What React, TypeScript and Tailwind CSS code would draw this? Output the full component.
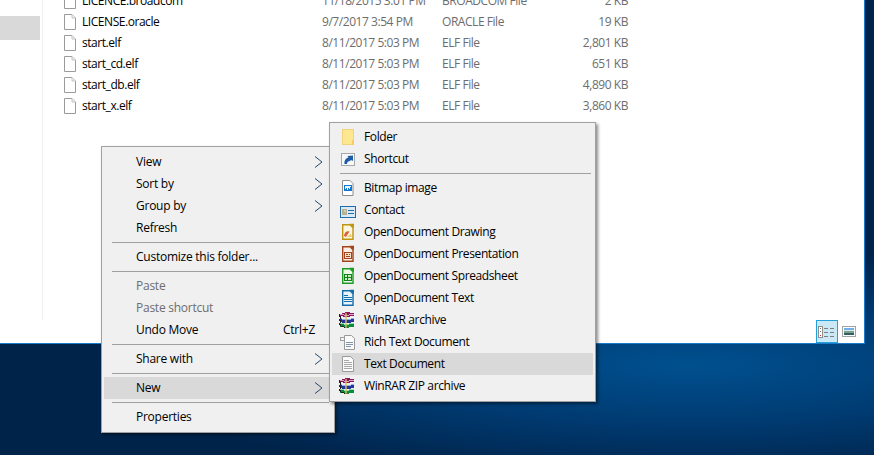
import type { ReactNode } from 'react'

const files = [
  { name: 'LICENCE.broadcom', date: '11/18/2015 3:01 PM', type: 'BROADCOM File', size: '2 KB' },
  { name: 'LICENSE.oracle', date: '9/7/2017 3:54 PM', type: 'ORACLE File', size: '19 KB' },
  { name: 'start.elf', date: '8/11/2017 5:03 PM', type: 'ELF File', size: '2,801 KB' },
  { name: 'start_cd.elf', date: '8/11/2017 5:03 PM', type: 'ELF File', size: '651 KB' },
  { name: 'start_db.elf', date: '8/11/2017 5:03 PM', type: 'ELF File', size: '4,890 KB' },
  { name: 'start_x.elf', date: '8/11/2017 5:03 PM', type: 'ELF File', size: '3,860 KB' },
]

function Icon({ children }: { children: ReactNode }) {
  return (
    <svg width="18" height="18" viewBox="0 0 18 18" className="shrink-0" shapeRendering="crispEdges">
      {children}
    </svg>
  )
}

function BlankFile() {
  return (
    <svg width="12" height="16" viewBox="0 0 12 16" className="shrink-0">
      <path d="M.5.5h7.500l3.500 3.500v11.500h-11z" fill="#fff" stroke="#9b9b9b" />
      <path d="M8 .5v3.500h3.500" fill="#f0f0f0" stroke="#c4c4c4" />
    </svg>
  )
}

function OdIcon({ color, tint, children }: { color: string; tint: string; children: ReactNode }) {
  return (
    <Icon>
      <path d="M4.700 1.700h7.300l3 3v11.600h-10.300z" fill={tint} stroke={color} strokeWidth="1.400" shapeRendering="auto" />
      <path d="M11.500 .8h4.500v4.500z" fill={color} shapeRendering="auto" />
      {children}
    </Icon>
  )
}

function RarIcon() {
  return (
    <Icon>
      <path d="M2 3 8 1l8 1v3l-8 1-6-1z" fill="#8c1560" />
      <path d="M2 3l6 1.500L16 3" fill="none" stroke="#d9a7c6" />
      <path d="M2 7.500l6 1.500 8-1.500v3.500l-8 1.500-6-1.500z" fill="#27349c" />
      <path d="M2 7.500l6 1.500 8-1.500" fill="none" stroke="#90b0e8" />
      <path d="M2 12l6 1.500 8-1.500v3.500l-8 1.500-6-1.500z" fill="#0f8a3c" />
      <path d="M2 12l6 1.500 8-1.500" fill="none" stroke="#90e0a8" />
      <path d="M2 3l-.5 2 1.500 2-1.500 2 1.500 2-1.500 2 1.500 2 5.500 2" fill="none" stroke="#202020" />
      <path d="M8 1.500v15" fill="none" stroke="#d8c060" strokeOpacity=".7" strokeWidth="1.200" />
    </Icon>
  )
}

const subIcons: Record<string, ReactNode> = {
  Folder: (
    <Icon>
      <path d="M4.500 1.500h11v15h-11z" fill="#ffe690" stroke="#f0d27a" />
      <path d="M14 12h2v4.500h-2z" fill="#f5cd62" />
    </Icon>
  ),
  Shortcut: (
    <Icon>
      <path d="M3.500 3.500h13v12h-13z" fill="#f8f8f8" stroke="#a8a8a8" />
      <path d="M6.500 14c-.5-3.500 1.500-6 4-6.500L9.500 6 15 5.500v5.500L13 10l-1 1c-1.800 0-3 1-3 3z" fill="#1f5ca8" shapeRendering="auto" />
    </Icon>
  ),
  'Bitmap image': (
    <Icon>
      <path d="M4.500 1.500h7.500l3 3v12h-10.500z" fill="#fff" stroke="#8d8d8d" shapeRendering="auto" />
      <path d="M6 6h8v6H6z" fill="#1278d0" />
      <path d="M7 7h6v1h-1v2h-1V9h-1v2H9V9H8v1H7z" fill="#eaf5ff" />
    </Icon>
  ),
  Contact: (
    <Icon>
      <path d="M2.500 5.500h15v11h-15z" fill="#d8eaf8" stroke="#1f6ea8" strokeWidth="1" />
      <path d="M4 8h5v6H4z" fill="#b8b094" />
      <path d="M5.500 9h2v2h-2z" fill="#e0c8a8" />
      <path d="M10 9h6v1h-6zM10 12h6v1h-6z" fill="#1f6ea8" />
    </Icon>
  ),
  'OpenDocument Drawing': (
    <OdIcon color="#bf9410" tint="#fbf6e0">
      <path d="M6 13c0-3.500 3-5.500 5.500-4.500L8 14z" fill="#d9643a" shapeRendering="auto" />
      <path d="M9 14l4-3.500.8 3.500z" fill="#ecc878" shapeRendering="auto" />
    </OdIcon>
  ),
  'OpenDocument Presentation': (
    <OdIcon color="#a3441c" tint="#fbeee4">
      <path d="M6.500 7.500h7v6h-7z" fill="#f9dfc8" stroke="#a3441c" />
      <path d="M8 9h2v1H8zM11 9h1v1h-1zM8 11h4v1H8z" fill="#a3441c" />
    </OdIcon>
  ),
  'OpenDocument Spreadsheet': (
    <OdIcon color="#1e9a24" tint="#ecf8e8">
      <path d="M6 7h8v7H6z" fill="#12801c" />
      <path d="M7 8h2v2H7zM10 8h3v2h-3zM7 11h2v2H7zM10 11h3v2h-3z" fill="#c8eebc" />
    </OdIcon>
  ),
  'OpenDocument Text': (
    <OdIcon color="#156ca8" tint="#e8f3fa">
      <path d="M6 6h4v1H6zM6 8h8v1H6zM6 10h8v1H6zM6 12h8v1H6z" fill="#156ca8" />
    </OdIcon>
  ),
  'WinRAR archive': <RarIcon />,
  'Rich Text Document': (
    <Icon>
      <path d="M2.500 4.500h10v3h-10z" fill="#f4f4f4" stroke="#a0a0a0" />
      <path d="M6.500 2.500h7l3 3v11h-10z" fill="#fbfbfb" stroke="#9a9a9a" shapeRendering="auto" />
      <path d="M8 9h7v1H8zM8 11h7v1H8zM8 13h5v1H8z" fill="#8294a8" />
    </Icon>
  ),
  'Text Document': (
    <Icon>
      <path d="M4.500 1.500h8l3 3v12h-11z" fill="#fafafa" stroke="#9a9a9a" shapeRendering="auto" />
      <path d="M6 5h5v1H6zM6 7h8v1H6zM6 9h8v1H6zM6 11h8v1H6zM6 13h8v1H6z" fill="#a8a8a8" />
    </Icon>
  ),
  'WinRAR ZIP archive': <RarIcon />,
}

function Chevron() {
  return (
    <svg width="9" height="12" viewBox="0 0 9 12" className="absolute top-[5px] right-[9px]">
      <path d="M1 .5 8 6 1 11.500" fill="none" stroke="#24466a" />
    </svg>
  )
}

function Separator({ className }: { className: string }) {
  return <div className={`my-[3px] h-px bg-[#a0a0a0] ${className}`} />
}

function MainItem({
  label,
  shortcut,
  arrow,
  disabled,
  active,
}: {
  label: string
  shortcut?: string
  arrow?: boolean
  disabled?: boolean
  active?: boolean
}) {
  return (
    <div
      className={`relative mx-[2px] flex h-[22px] items-center justify-between pr-[17px] pl-[32px] ${
        active ? 'bg-[#d9d9d9]' : ''
      } ${disabled ? 'text-[#6d6d6d]' : 'text-black'}`}
    >
      <span>{label}</span>
      {shortcut && <span>{shortcut}</span>}
      {arrow && <Chevron />}
    </div>
  )
}

function SubItem({ label, active }: { label: string; active?: boolean }) {
  return (
    <div className={`mx-[2px] flex h-[22px] items-center gap-[8px] pl-[6px] text-black ${active ? 'bg-[#d9d9d9]' : ''}`}>
      {subIcons[label]}
      <span>{label}</span>
    </div>
  )
}

export default function App() {
  return (
    <div className="relative h-[455px] w-[874px] overflow-hidden bg-[radial-gradient(ellipse_600px_115px_at_690px_365px,#00508f_0%,#003d75_45%,#00234a_100%)] font-['Open_Sans','Noto_Sans',sans-serif] text-[12px] tracking-[-0.25px]">
      {/* explorer window */}
      <div className="flex h-[344px] w-[865px] flex-col border-r border-b border-[#1a7bc8] bg-white">
        <div className="flex min-h-0 flex-1 overflow-hidden">
          <div className="w-[43px] shrink-0 border-r border-[#f0f0f0] pt-[16px]">
            <div className="h-[24px] w-[40px] bg-[#d9d9d9]" />
          </div>
          <div className="-mt-[10px] flex-1 pl-[21px] tracking-[-0.45px]">
            {files.map((f) => (
              <div key={f.name} className="flex h-[21px] items-center">
                <BlankFile />
                <span className="ml-[6px] w-[240px] text-black">{f.name}</span>
                <span className="w-[120px] text-[#6d6d6d]">{f.date}</span>
                <span className="w-[110px] text-[#6d6d6d]">{f.type}</span>
                <span className="w-[76px] text-right text-[#6d6d6d]">{f.size}</span>
              </div>
            ))}
          </div>
        </div>
        <div className="flex h-[23px] shrink-0 items-center justify-end pr-[8px]">
          <div className="flex h-[23px] w-[22px] items-center justify-center border border-[#26a0da] bg-[#cbe8f6]">
            <svg width="18" height="14" viewBox="0 0 18 14" shapeRendering="crispEdges">
              <path d="M.5 1.500h4v11h-4z" fill="#fff" stroke="#8e8e8e" />
              <path d="M2 3h1v1H2zM2 6h1v1H2z" fill="#6d6d6d" />
              <path d="M2 10h1v1H2z" fill="#c42b2b" />
              <path d="M6 3h4v1H6zM12 3h4v1h-4zM6 7h4v1H6zM12 7h4v1h-4zM6 11h4v1H6zM12 11h4v1h-4z" fill="#7d7d7d" />
            </svg>
          </div>
          <div className="ml-[4px] flex w-[14px] items-center">
            <svg width="14" height="11" viewBox="0 0 14 11" shapeRendering="crispEdges">
              <path d="M.5.5h13v10H.5z" fill="#fff" stroke="#a3a3a3" />
              <path d="M2 2h10v2H2z" fill="#6fb0e8" />
              <path d="M2 4h10v1H2z" fill="#d8e8f0" />
              <path d="M2 5h10v2H2z" fill="#7f9f8f" />
              <path d="M2 7h10v2H2z" fill="#2f5f5f" />
            </svg>
          </div>
        </div>
      </div>

      {/* context menu */}
      <div className="absolute top-[146px] left-[101px] w-[234px] border border-[#a0a0a0] bg-[#f0f0f0] pt-[4px] shadow-[2px_2px_3px_rgba(0,0,0,0.45)]">
        <MainItem label="View" arrow />
        <MainItem label="Sort by" arrow />
        <MainItem label="Group by" arrow />
        <MainItem label="Refresh" />
        <Separator className="mr-[5px] ml-[10px]" />
        <MainItem label="Customize this folder..." />
        <Separator className="mr-[5px] ml-[10px]" />
        <MainItem label="Paste" disabled />
        <MainItem label="Paste shortcut" disabled />
        <MainItem label="Undo Move" shortcut="Ctrl+Z" />
        <Separator className="mr-[5px] ml-[10px]" />
        <MainItem label="Share with" arrow />
        <Separator className="mr-[5px] ml-[10px]" />
        <MainItem label="New" arrow active />
        <Separator className="mr-[5px] ml-[10px]" />
        <MainItem label="Properties" />
        <div className="h-[4px]" />
      </div>

      {/* New submenu */}
      <div className="absolute top-[122px] left-[329px] w-[267px] border border-[#a0a0a0] bg-[#f0f0f0] pt-[3px] tracking-[-0.38px] shadow-[2px_2px_3px_rgba(0,0,0,0.45)]">
        <SubItem label="Folder" />
        <SubItem label="Shortcut" />
        <Separator className="mr-[4px] ml-[10px]" />
        <SubItem label="Bitmap image" />
        <SubItem label="Contact" />
        <SubItem label="OpenDocument Drawing" />
        <SubItem label="OpenDocument Presentation" />
        <SubItem label="OpenDocument Spreadsheet" />
        <SubItem label="OpenDocument Text" />
        <SubItem label="WinRAR archive" />
        <SubItem label="Rich Text Document" />
        <SubItem label="Text Document" active />
        <SubItem label="WinRAR ZIP archive" />
        <div className="h-[4px]" />
      </div>
    </div>
  )
}
